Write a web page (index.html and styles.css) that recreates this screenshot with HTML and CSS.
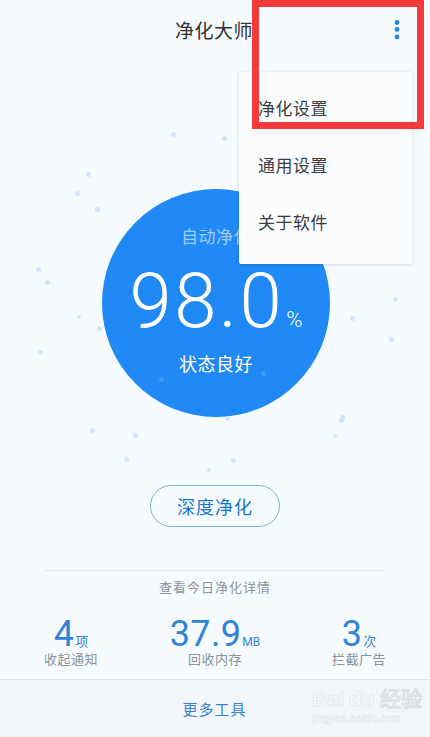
FILE: index.html
```html
<!DOCTYPE html>
<html lang="zh-CN">
<head>
<meta charset="utf-8">
<title>净化大师</title>
<link rel="stylesheet" href="styles.css">
</head>
<body>
<div class="app">
  <header class="topbar">
    <h1 class="title">净化大师</h1>
    <button class="more" aria-label="更多">
      <svg width="8" height="22" viewBox="0 0 8 22"><circle cx="4" cy="3.5" r="2.4"/><circle cx="4" cy="10.5" r="2.4"/><circle cx="4" cy="18" r="2.4"/></svg>
    </button>
  </header>

  <main class="main">
    <div class="dots">
      <i class="dot" style="left:171px;top:132px"></i>
      <i class="dot" style="left:222px;top:136px"></i>
      <i class="dot" style="left:86px;top:172px"></i>
      <i class="dot" style="left:75px;top:191px"></i>
      <i class="dot" style="left:95px;top:207px"></i>
      <i class="dot" style="left:36px;top:267px"></i>
      <i class="dot" style="left:45px;top:280px"></i>
      <i class="dot s" style="left:77px;top:315px"></i>
      <i class="dot" style="left:97px;top:326px"></i>
      <i class="dot" style="left:38px;top:350px"></i>
      <i class="dot in" style="left:159px;top:377px"></i>
      <i class="dot in" style="left:261px;top:371px"></i>
      <i class="dot" style="left:225px;top:416px"></i>
      <i class="dot" style="left:339px;top:418px"></i>
      <i class="dot" style="left:393px;top:297px"></i>
      <i class="dot" style="left:350px;top:316px"></i>
      <i class="dot" style="left:389px;top:337px"></i>
      <i class="dot" style="left:340px;top:415px"></i>
      <i class="dot s" style="left:333px;top:434px"></i>
      <i class="dot" style="left:90px;top:428px"></i>
      <i class="dot" style="left:133px;top:433px"></i>
      <i class="dot" style="left:124px;top:457px"></i>
      <i class="dot" style="left:231px;top:458px"></i>
      <i class="dot s" style="left:207px;top:468px"></i>
    </div>

    <div class="gauge">
      <div class="gauge-label">自动净化</div>
      <div class="gauge-value"><span class="num">98.0</span><span class="pct">%</span></div>
      <div class="gauge-status">状态良好</div>
    </div>

    <button class="deep">深度净化</button>

    <section class="summary">
      <div class="summary-title">查看今日净化详情</div>
      <div class="stats">
        <div class="stat">
          <div class="stat-val"><span class="big">4</span><span class="unit">项</span></div>
          <div class="stat-label">收起通知</div>
        </div>
        <div class="stat">
          <div class="stat-val"><span class="big">37.9</span><span class="unit mb">MB</span></div>
          <div class="stat-label">回收内存</div>
        </div>
        <div class="stat">
          <div class="stat-val"><span class="big">3</span><span class="unit">次</span></div>
          <div class="stat-label">拦截广告</div>
        </div>
      </div>
    </section>
  </main>

  <footer class="footer">
    <span class="tools">更多工具</span>
    <div class="watermark">
      <div class="wm-logo">Bai<span class="paw">du</span> 经验</div>
      <div class="wm-url">jingyan.baidu.com</div>
    </div>
  </footer>

  <nav class="menu">
    <div class="menu-item">净化设置</div>
    <div class="menu-item">通用设置</div>
    <div class="menu-item">关于软件</div>
  </nav>

  <div class="highlight"></div>
</div>
</body>
</html>
```

FILE: styles.css
```css
* { box-sizing: border-box; }
html, body { margin: 0; padding: 0; }
body {
  width: 430px;
  height: 737px;
  overflow: hidden;
  background: #f6fbff;
  font-family: "Noto Sans CJK SC", "Noto Sans", sans-serif;
}
.app {
  position: relative;
  width: 430px;
  height: 737px;
  display: flex;
  flex-direction: column;
}
.topbar {
  height: 58px;
  display: flex;
  align-items: center;
  justify-content: center;
  position: relative;
}
.title {
  margin: 0;
  font-size: 19px;
  font-weight: 400;
  color: #333;
  letter-spacing: 0.5px;
  margin-right: 2px;
}
.more {
  position: absolute;
  right: 29px;
  top: 19px;
  border: 0;
  background: none;
  padding: 0;
  line-height: 0;
}
.more svg { fill: #2189f5; display: block; }

.main {
  flex: 1;
  display: flex;
  flex-direction: column;
  align-items: center;
  position: relative;
}
.dots {
  position: absolute;
  left: 0;
  top: -58px;
  width: 430px;
  height: 0;
  z-index: 2;
}
.dot {
  position: absolute;
  width: 5px;
  height: 5px;
  border-radius: 50%;
  background: #d4e5fb;
}
.dot.s { width: 4px; height: 4px; }
.dot.in { background: #3d9af6; }

.gauge {
  margin-top: 131px;
  width: 228px;
  height: 228px;
  border-radius: 50%;
  background: #2189f5;
  display: flex;
  flex-direction: column;
  align-items: center;
  padding-top: 37px;
  margin-left: 2px;
}
.gauge-label {
  font-size: 17px;
  line-height: 20px;
  color: #9fcbf8;
  letter-spacing: 0.5px;
}
.gauge-value {
  margin-top: 17px;
  display: flex;
  align-items: baseline;
  color: #fff;
  font-family: Roboto, "Open Sans", sans-serif;
  margin-left: 0;
}
.num {
  font-size: 76px;
  line-height: 76px;
  font-weight: 300;
  letter-spacing: 2.5px;
}
.pct {
  font-size: 22px;
  font-weight: 300;
  margin-left: 2px;
}
.gauge-status {
  margin-top: 13px;
  font-size: 18px;
  line-height: 22px;
  color: #fff;
  letter-spacing: 0.5px;
}

.deep {
  margin-top: 68px;
  width: 130px;
  height: 42px;
  border-radius: 21px;
  border: 1.5px solid #7db3dc;
  background: transparent;
  color: #1a76cf;
  font-family: "Noto Sans CJK SC", sans-serif;
  font-size: 18px;
  letter-spacing: 1px;
  padding: 0;
}

.summary {
  margin-top: 43px;
  width: 340px;
  border-top: 1px solid #e1e9f0;
  display: flex;
  flex-direction: column;
  align-items: center;
}
.summary-title {
  margin-top: 7px;
  font-size: 13px;
  line-height: 18px;
  color: #8b929a;
  letter-spacing: 1px;
}
.stats {
  margin-top: 22px;
  width: 430px;
  display: grid;
  grid-template-columns: repeat(3, 144px);
  justify-content: center;
}
.stat {
  display: flex;
  flex-direction: column;
  align-items: center;
}
.stat-val {
  display: flex;
  align-items: baseline;
  color: #3184d9;
  font-family: Roboto, "Open Sans", sans-serif;
  height: 32px;
}
.big {
  font-size: 36px;
  line-height: 32px;
  letter-spacing: 0.3px;
}
.unit {
  font-family: "Noto Sans CJK SC", sans-serif;
  font-size: 13px;
  line-height: 14px;
  margin-left: 1px;
}
.unit.mb { font-family: Roboto, sans-serif; font-size: 12px; }
.stat-label {
  margin-top: 2px;
  font-size: 13px;
  line-height: 14px;
  color: #8b929a;
  letter-spacing: 0.5px;
}

.footer {
  height: 58px;
  border-top: 1px solid #e0e8ef;
  background: #f1f6fa;
  display: flex;
  align-items: center;
  justify-content: center;
  position: relative;
}
.tools {
  font-size: 15px;
  color: #3b82d4;
  letter-spacing: 1px;
  margin-left: -1px;
}
.watermark {
  position: absolute;
  left: 312px;
  top: 6px;
  display: flex;
  flex-direction: column;
  align-items: flex-start;
  opacity: 0.85;
}
.wm-logo {
  font-family: "Liberation Sans", sans-serif;
  font-weight: 700;
  font-size: 21px;
  line-height: 26px;
  color: #f7f9fb;
  -webkit-text-stroke: 0.5px #dadee2;
}
.paw { margin-left: 4px; }
.wm-url {
  font-family: "Liberation Sans", sans-serif;
  font-size: 11px;
  line-height: 13px;
  color: #f7f9fb;
  -webkit-text-stroke: 0.3px #d6dade;
}

.menu {
  position: absolute;
  left: 239px;
  top: 72px;
  width: 173px;
  height: 192px;
  background: #fafcfe;
  border-radius: 2px;
  box-shadow: 0 1px 4px rgba(0,0,0,0.13), 0 0 1px rgba(0,0,0,0.08);
  padding-top: 7px;
  z-index: 5;
}
.menu-item {
  height: 57px;
  display: flex;
  align-items: center;
  padding-left: 19px;
  font-size: 17px;
  color: #3d3d3d;
  letter-spacing: 0.5px;
}
.highlight {
  position: absolute;
  left: 252px;
  top: 0;
  width: 172px;
  height: 129px;
  border: 7px solid #f4393a;
  z-index: 6;
}
```
